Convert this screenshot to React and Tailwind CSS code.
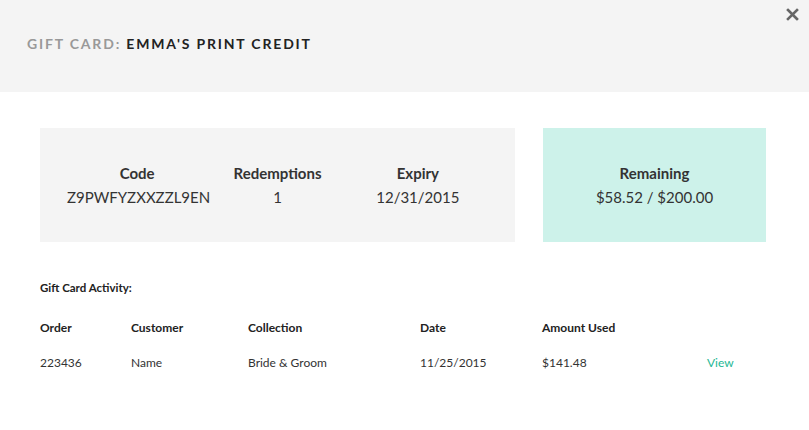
import React from 'react';

const rows = [
  { order: '223436', customer: 'Name', collection: 'Bride & Groom', date: '11/25/2015', amount: '$141.48' },
];

const stats = [
  { label: 'Code', value: 'Z9PWFYZXXZZL9EN' },
  { label: 'Redemptions', value: '1' },
  { label: 'Expiry', value: '12/31/2015' },
];

const App = () => {
  return (
    <div className="w-[809px] h-[430px] bg-white text-[#333] overflow-hidden" style={{ fontFamily: 'Lato, "Open Sans", sans-serif' }}>
      {/* Header */}
      <div className="relative h-[92px] bg-[#f4f4f4] flex items-center pl-[27px] pb-[5px]">
        <h1 className="text-[14px] font-bold tracking-[0.13em] uppercase">
          <span className="text-[#999]">Gift Card: </span>
          <span className="text-[#222]">Emma's Print Credit</span>
        </h1>
        <button className="absolute top-[4px] right-[6px] text-[#666] p-1">
          <svg width="13" height="13" viewBox="0 0 13 13" fill="none">
            <path d="M2 2L11 11M11 2L2 11" stroke="currentColor" strokeWidth="2.6" strokeLinecap="square" />
          </svg>
        </button>
      </div>

      {/* Summary */}
      <div className="flex gap-[28px] px-[40px] pt-[36px]">
        <div className="w-[475px] h-[114px] bg-[#f4f4f4] px-[27px] grid grid-cols-3 items-center">
          {stats.map((s) => (
            <div key={s.label} className="text-center">
              <div className="text-[15px] font-bold text-[#333] leading-[22px]">{s.label}</div>
              <div className="text-[15px] text-[#333] leading-[22px] mt-[2px]">{s.value}</div>
            </div>
          ))}
        </div>
        <div className="w-[223px] h-[114px] bg-[#cdf2ea] flex flex-col items-center justify-center">
          <div className="text-[15px] font-bold leading-[22px]">Remaining</div>
          <div className="text-[15px] leading-[22px] mt-[2px]">$58.52 / $200.00</div>
        </div>
      </div>

      {/* Activity */}
      <div className="px-[40px] pt-[37px]">
        <div className="text-[11.5px] font-bold text-[#222]">Gift Card Activity:</div>
        <table className="mt-[18px] text-[12px] text-left">
          <thead>
            <tr className="font-bold text-[#222]">
              <th className="w-[91px] h-[28px] font-bold">Order</th>
              <th className="w-[117px] font-bold">Customer</th>
              <th className="w-[172px] font-bold">Collection</th>
              <th className="w-[122px] font-bold">Date</th>
              <th className="w-[165px] font-bold">Amount Used</th>
              <th></th>
            </tr>
          </thead>
          <tbody>
            {rows.map((r) => (
              <tr key={r.order} className="text-[#333]">
                <td className="h-[42px]">{r.order}</td>
                <td>{r.customer}</td>
                <td>{r.collection}</td>
                <td>{r.date}</td>
                <td>{r.amount}</td>
                <td className="text-[#1fb894]">View</td>
              </tr>
            ))}
          </tbody>
        </table>
      </div>
    </div>
  );
};

export default App;
